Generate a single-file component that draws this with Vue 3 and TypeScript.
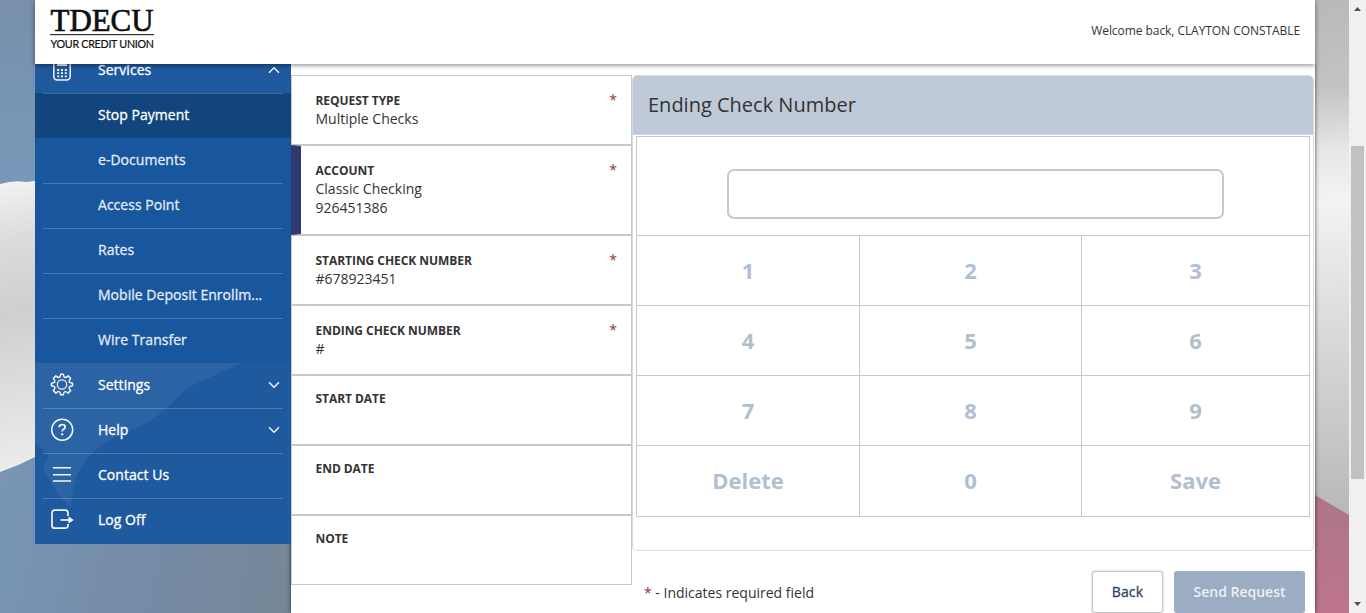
<script setup lang="ts">
interface NavItem {
  label: string
  icon?: 'services' | 'settings' | 'help' | 'contact' | 'logoff'
  chevron?: 'up' | 'down'
  sub?: boolean
  active?: boolean
}
interface Field {
  label: string
  lines: string[]
  required?: boolean
  selected?: boolean
}

const navItems: NavItem[] = [
  { label: 'Services', icon: 'services', chevron: 'up' },
  { label: 'Stop Payment', sub: true, active: true },
  { label: 'e-Documents', sub: true },
  { label: 'Access Point', sub: true },
  { label: 'Rates', sub: true },
  { label: 'Mobile Deposit Enrollm...', sub: true },
  { label: 'Wire Transfer', sub: true },
  { label: 'Settings', icon: 'settings', chevron: 'down' },
  { label: 'Help', icon: 'help', chevron: 'down' },
  { label: 'Contact Us', icon: 'contact' },
  { label: 'Log Off', icon: 'logoff' },
]

const fields: Field[] = [
  { label: 'REQUEST TYPE', lines: ['Multiple Checks'], required: true },
  { label: 'ACCOUNT', lines: ['Classic Checking', '926451386'], required: true, selected: true },
  { label: 'STARTING CHECK NUMBER', lines: ['#678923451'], required: true },
  { label: 'ENDING CHECK NUMBER', lines: ['#'], required: true },
  { label: 'START DATE', lines: [] },
  { label: 'END DATE', lines: [] },
  { label: 'NOTE', lines: [] },
]

const keys: string[] = ['1', '2', '3', '4', '5', '6', '7', '8', '9', 'Delete', '0', 'Save']
</script>

<template>
  <div class="app">
    <svg class="backdrop" width="1366" height="613" viewBox="0 0 1366 613" aria-hidden="true">
      <defs>
        <linearGradient id="sky" x1="0" y1="0" x2="0" y2="1">
          <stop offset="0" stop-color="#7890ad" />
          <stop offset="1" stop-color="#7799ba" />
        </linearGradient>
        <linearGradient id="cloth" gradientUnits="userSpaceOnUse" x1="0" y1="180" x2="50" y2="470">
          <stop offset="0" stop-color="#f3f3f3" />
          <stop offset=".2" stop-color="#dcdcdc" />
          <stop offset=".45" stop-color="#cfcfcf" />
          <stop offset=".72" stop-color="#dedede" />
          <stop offset="1" stop-color="#ededed" />
        </linearGradient>
        <linearGradient id="wave" gradientUnits="userSpaceOnUse" x1="0" y1="500" x2="290" y2="570">
          <stop offset="0" stop-color="#7895b6" />
          <stop offset=".45" stop-color="#758ca9" />
          <stop offset="1" stop-color="#768798" />
        </linearGradient>
        <linearGradient id="right" gradientUnits="userSpaceOnUse" x1="1315" y1="0" x2="1345" y2="515">
          <stop offset="0" stop-color="#b9b9b9" />
          <stop offset=".17" stop-color="#c3c3c3" />
          <stop offset=".29" stop-color="#e6e6e6" />
          <stop offset=".39" stop-color="#f3f3f3" />
          <stop offset=".6" stop-color="#dedede" />
          <stop offset="1" stop-color="#b8b8b8" />
        </linearGradient>
        <linearGradient id="rose" x1="0" y1="0" x2="0" y2="1">
          <stop offset="0" stop-color="#ad7588" />
          <stop offset="1" stop-color="#bc758e" />
        </linearGradient>
      </defs>
      <rect width="300" height="200" fill="url(#sky)" />
      <path d="M0 184 Q14 180 26 182 L35 181 H291 V480 H0Z" fill="url(#cloth)" />
      <path d="M0 472 Q18 466 35 457 L80 430 H291 V613 H0Z" fill="url(#wave)" />
      <rect x="1315" width="34" height="515" fill="url(#right)" />
      <path d="M1315 495 L1349 515 V613 H1315Z" fill="url(#rose)" />
    </svg>

    <header class="header">
      <svg class="logo" width="120" height="56" viewBox="0 0 120 56" role="img" aria-label="TDECU Your Credit Union">
        <text class="brand" x="6.500" y="30.500" textLength="103" lengthAdjust="spacingAndGlyphs">TDECU</text>
        <rect x="6" y="34" width="104" height="1.2" fill="#333" />
        <text class="tagline" x="6.500" y="47.500" textLength="103.500" lengthAdjust="spacing">YOUR CREDIT UNION</text>
      </svg>
      <span class="welcome">Welcome back, CLAYTON CONSTABLE</span>
    </header>

    <div class="body">
      <nav class="nav">
        <svg class="nav-art" width="256" height="181" viewBox="0 0 256 181" aria-hidden="true">
          <path d="M0 0H206L150 26Q125 58 80 74Q36 96 36 145L22 130L8 105L14 92L0 80Z" />
        </svg>
        <a v-for="item in navItems" :key="item.label" class="nav-row" :class="{ sub: item.sub, active: item.active }">
          <span class="nav-icon">
            <svg v-if="item.icon" width="24" height="24" viewBox="0 0 24 24">
              <g v-if="item.icon === 'services'">
                <rect x="3.800" y="1" width="16.400" height="21" rx="3.500" stroke-width="1.500" />
                <path d="M7 6.500h10" stroke-width="3" />
                <path d="M7.200 12h2m1.800 0h2m1.800 0h2M7.200 15.200h2m1.800 0h2m1.800 0h2M7.200 18.400h2m1.800 0h2m1.800 0h2" stroke-width="1.800" />
              </g>
              <g v-else-if="item.icon === 'settings'">
                <circle cx="12" cy="11.500" r="4.700" stroke-width="1.200" />
                <path d="M10.700 1.200h2.600q.4 3 1.500 3.300 1 .4 3.300-1.600l2.500 2.500q-1.900 2.300-1.500 3.300.4 1.100 3.400 1.500v2.600q-3 .4-3.400 1.500-.4 1 1.500 3.300l-2.500 2.500q-2.300-1.900-3.300-1.500-1.100.4-1.500 3.200h-2.600q-.4-2.800-1.500-3.200-1-.4-3.300 1.500l-2.500-2.500q1.900-2.300 1.500-3.300-.4-1.100-3.400-1.500v-2.600q3-.4 3.400-1.500.4-1-1.500-3.300l2.500-2.500q2.300 2 3.300 1.600 1.100-.3 1.500-3.300z" stroke-width="1.500" stroke-linejoin="round" />
              </g>
              <g v-else-if="item.icon === 'help'">
                <circle cx="12.200" cy="11.700" r="10.500" stroke-width="1.500" />
                <path d="M9.200 9.200Q9.200 6.700 12.200 6.700Q15.200 6.700 15.200 9Q15.200 10.500 13.500 11.300Q12.200 12 12.200 13.500" stroke-width="1.800" />
                <path d="M12.200 15.300v2" stroke-width="2" />
              </g>
              <path v-else-if="item.icon === 'contact'" d="M3 4.700h18M3 11.700h18M3 18h18" stroke-width="1.600" />
              <g v-else>
                <path d="M18 8V5q0-2.800-2.800-2.800H4.800Q2 2.200 2 5v12.400q0 2.800 2.800 2.800h10.400Q18 20.200 18 17.400V16" stroke-width="1.700" />
                <path d="M10.500 12h9" stroke-width="1.700" />
                <path d="M18.500 8.600 23.700 12l-5.200 3.400z" fill="#fff" stroke="none" />
              </g>
            </svg>
          </span>
          <span class="nav-label">{{ item.label }}</span>
          <svg v-if="item.chevron" class="chevron" :class="item.chevron" width="12" height="8" viewBox="0 0 12 8">
            <path d="M1 1.200 6 6.200 11 1.200" stroke-width="1.500" />
          </svg>
        </a>
      </nav>

      <main class="main">
        <section class="fields">
          <div v-for="field in fields" :key="field.label" class="field" :class="{ selected: field.selected, empty: !field.lines.length }">
            <div class="field-text">
              <strong>{{ field.label }}</strong>
              <span v-for="line in field.lines" :key="line">{{ line }}</span>
            </div>
            <span v-if="field.required" class="star">*</span>
          </div>
        </section>

        <section class="entry">
          <div class="panel">
            <h2>Ending Check Number</h2>
            <div class="keypad">
              <div class="display"><input type="text" aria-label="Ending check number" /></div>
              <button v-for="key in keys" :key="key" type="button">{{ key }}</button>
            </div>
          </div>
          <footer class="footer">
            <p><span class="red">*</span> - Indicates required field</p>
            <button type="button" class="back">Back</button>
            <button type="button" class="send">Send Request</button>
          </footer>
        </section>
      </main>
    </div>

    <div class="scrollbar" aria-hidden="true">
      <svg width="7" height="4" viewBox="0 0 7 4"><path d="M0 4 3.500 0 7 4z" fill="#505050" /></svg>
      <div class="thumb"></div>
      <svg width="7" height="4" viewBox="0 0 7 4"><path d="M0 0h7L3.500 4z" fill="#505050" /></svg>
    </div>
  </div>
</template>

<style>
body {
  overflow: hidden;
}
</style>

<style scoped>
* {
  box-sizing: border-box;
}
.app {
  position: relative;
  width: 1366px;
  height: 613px;
  padding-left: 35px;
  overflow: hidden;
  font-family: "Open Sans", "Noto Sans", sans-serif;
  color: #333;
}
.backdrop {
  position: absolute;
  left: 0;
  top: 0;
}
.header {
  position: relative;
  z-index: 3;
  display: flex;
  justify-content: space-between;
  width: 1280px;
  height: 64px;
  padding: 0 15px 0 9px;
  background: #fff;
  box-shadow: 0 1px 5px rgba(0, 0, 0, 0.5);
}
.logo {
  overflow: visible;
}
.brand {
  font: 32px "Liberation Serif", serif;
  fill: #0c100e;
  stroke: #0c100e;
  stroke-width: 0.7px;
}
.tagline {
  font: 400 10.700px Lato, sans-serif;
  fill: #111;
  stroke: #111;
  stroke-width: 0.2px;
}
.welcome {
  margin-top: 21px;
  font-size: 12px;
  line-height: 20px;
  letter-spacing: -0.060px;
}
.body {
  position: relative;
  display: flex;
  align-items: flex-start;
  width: 1280px;
  height: 549px;
}
.nav {
  position: relative;
  width: 256px;
  margin-top: -16px;
  background: #1f5a9f;
}
.nav-art {
  position: absolute;
  left: 0;
  bottom: 0;
  fill: rgba(255, 255, 255, 0.06);
}
.nav-row {
  position: relative;
  display: flex;
  align-items: center;
  height: 45px;
  padding: 0 11.500px 2px 15px;
  font-size: 14px;
  letter-spacing: 0.030px;
  -webkit-text-stroke: 0.300px currentColor;
  color: #fff;
}
.nav-row:last-child {
  height: 46px;
  padding-bottom: 3px;
}
.nav-row::after {
  content: "";
  position: absolute;
  left: 8px;
  right: 8px;
  bottom: -1px;
  height: 1px;
  z-index: 1;
  background: rgba(255, 255, 255, 0.2);
}
.nav-row.active::after,
.nav-row:nth-of-type(7)::after,
.nav-row:last-child::after {
  display: none;
}
.nav-row.sub {
  background: #18579e;
  color: #e4eaf2;
}
.nav-row.active {
  background: #12457e;
  color: #fff;
}
.nav-icon {
  width: 48px;
  height: 24px;
}
.nav-icon svg,
.chevron {
  fill: none;
  stroke: #f1f5fa;
  display: block;
}
.nav-label {
  flex: 1;
  white-space: nowrap;
}
.chevron.up {
  transform: rotate(180deg);
}
.main {
  display: flex;
  width: 1024px;
  height: 549px;
  padding-top: 11px;
  background: #fff;
  box-shadow: 0 0 4px rgba(0, 0, 0, 0.7);
}
.fields {
  width: 341px;
}
.field {
  display: flex;
  justify-content: space-between;
  height: 70px;
  padding: 15px 14px 0 23.500px;
  border: 1px solid #c8c8c8;
}
.field.selected {
  height: 90px;
  padding-left: 14.500px;
  border-left: 10px solid #2f386f;
}
.field.empty {
  padding-top: 13px;
}
.field-text {
  display: flex;
  flex-direction: column;
  font-size: 14px;
  line-height: 19px;
}
.field-text strong {
  height: 18px;
  font-size: 12px;
  letter-spacing: -0.050px;
}
.star {
  margin-top: -1px;
  font-size: 14px;
  line-height: 19px;
  color: #94332f;
}
.entry {
  width: 682px;
}
.panel {
  height: 476px;
  border: 1px solid #dadada;
  border-radius: 5px;
}
h2 {
  height: 59px;
  margin: 0;
  padding-left: 15px;
  border-bottom: 1px solid #d4d4d4;
  border-radius: 4px 4px 0 0;
  background: #bfcad8;
  font-size: 20px;
  font-weight: 400;
  line-height: 58px;
}
.keypad {
  display: grid;
  grid-template-columns: 223px 222px 1fr;
  grid-template-rows: 99px 70px 70px 70px 70px;
  width: 674px;
  height: 381px;
  margin: 1px 0 0 3px;
  border: 1px solid #c8c8c8;
}
.display {
  grid-column: 1 / -1;
  display: flex;
  justify-content: center;
  padding: 32px 0 0 5px;
  border-bottom: 1px solid #c8c8c8;
}
.display input {
  width: 497px;
  height: 50px;
  border: 2px solid #c8c8c8;
  border-radius: 7px;
  background: #fff;
}
.keypad button {
  padding: 0 0 2px;
  border: 0;
  border-right: 1px solid #c8c8c8;
  border-bottom: 1px solid #c8c8c8;
  background: #fff;
  font: bold 22px "Open Sans", sans-serif;
  color: #b1bfd0;
}
.keypad button:nth-of-type(3n) {
  border-right: 0;
}
.keypad button:nth-of-type(n + 10) {
  border-bottom: 0;
}
.footer {
  display: flex;
  align-items: flex-start;
  padding: 20px 9px 0 12px;
  font-size: 14px;
}
.footer p {
  flex: 1;
  margin: 12px 0 0;
  line-height: 20px;
}
.red {
  color: #94332f;
}
.footer button {
  height: 42px;
  padding-bottom: 3px;
  border-radius: 3px;
  font: 600 14px "Open Sans", sans-serif;
}
.footer .back {
  width: 71px;
  margin-right: 11px;
  border: 1px solid #c8c8c8;
  box-shadow: 0 0 2px rgba(0, 0, 0, 0.3);
  background: #fff;
  color: #2b4160;
  font-weight: 400;
  letter-spacing: 0.100px;
  -webkit-text-stroke: 0.300px currentColor;
}
.send {
  width: 131px;
  border: 0;
  background: #9bacc3;
  color: #edf0f4;
}
.scrollbar {
  position: absolute;
  right: 0;
  top: 0;
  display: flex;
  flex-direction: column;
  align-items: center;
  width: 17px;
  height: 613px;
  padding: 7px 0;
  background: #f0f0f0;
}
.thumb {
  width: 13px;
  height: 333px;
  margin: 135px 0 auto;
  background: #c1c1c1;
}
</style>
